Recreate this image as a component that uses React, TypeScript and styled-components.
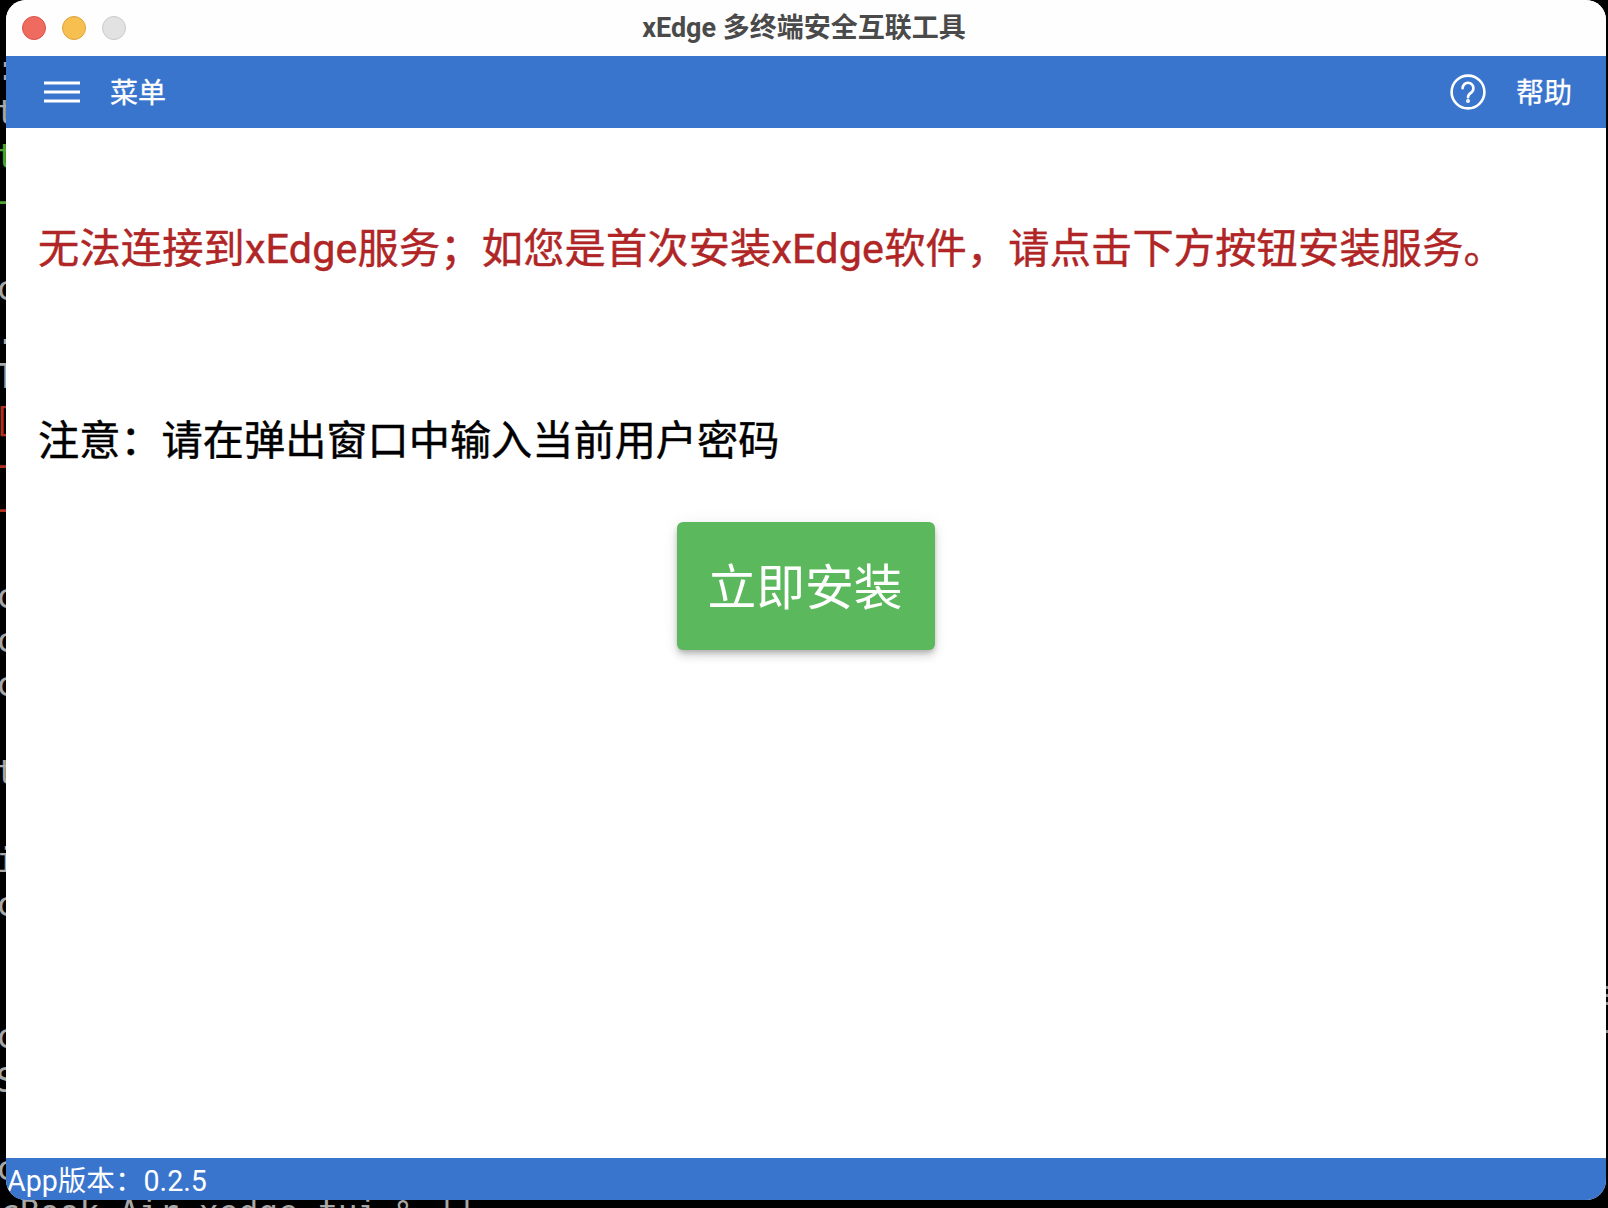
import React from 'react';
import styled, { createGlobalStyle } from 'styled-components';

const Global = createGlobalStyle`
  html, body { margin: 0; padding: 0; background: #000; }
  body { font-family: Roboto, "Noto Sans CJK SC", sans-serif; }
`;

const Desktop = styled.div`
  position: relative;
  width: 1608px;
  height: 1208px;
  overflow: hidden;
  background: #000;
`;

const Terminal = styled.div`
  position: absolute;
  left: -4px;
  top: 47px;
  font-family: "DejaVu Sans Mono", monospace;
  font-size: 33px;
  line-height: 44px;
  color: #a8a8a8;
  white-space: pre;
  opacity: 0.999;
`;

const TermLine = styled.div<{ $color?: string; $indent?: number; $rule?: boolean }>`
  height: 44px;
  line-height: ${p => (p.$rule ? 48 : 44)}px;
  color: ${p => p.$color ?? 'inherit'};
  margin-left: ${p => p.$indent ?? 0}px;
`;

const PromptLine = styled(TermLine)`
  padding-left: 4px;
`;

const EdgeTick = styled.div`
  position: absolute;
  right: 0;
  width: 2px;
  height: 3px;
  background: #8a8a8a;
`;

const Window = styled.div`
  position: absolute;
  left: 6px;
  top: 0;
  width: 1600px;
  height: 1200px;
  display: flex;
  flex-direction: column;
  background: #fff;
  border-radius: 20px;
  overflow: hidden;
`;

const TitleBar = styled.div`
  position: relative;
  height: 56px;
  flex: none;
  display: flex;
  justify-content: center;
  background: #fefefe;
`;

const Lights = styled.div`
  position: absolute;
  left: 16px;
  top: 16px;
  display: flex;
  gap: 16px;
`;

const Light = styled.div<{ $bg: string; $line: string }>`
  width: 24px;
  height: 24px;
  box-sizing: border-box;
  border-radius: 50%;
  background: ${p => p.$bg};
  border: 1px solid ${p => p.$line};
`;

const Title = styled.div`
  margin: 8px 4px 0 0;
  line-height: 40px;
  font-size: 27px;
  font-weight: 700;
  color: #4a4a4a;
`;

const Header = styled.header`
  height: 72px;
  flex: none;
  display: flex;
  align-items: center;
  justify-content: space-between;
  padding: 0 34px 0 38px;
  background: #3a75cd;
  color: #fff;
`;

const HeaderGroup = styled.div<{ $gap: number }>`
  display: flex;
  align-items: center;
  gap: ${p => p.$gap}px;
`;

const HeaderLabel = styled.span`
  font-size: 28px;
  line-height: 36px;
  margin-top: 4px;
  -webkit-text-stroke: 0.3px #fff;
`;

const Content = styled.main`
  flex: 1;
  min-height: 0;
  display: flex;
  flex-direction: column;
  padding: 0 33px 0 32px;
`;

const ErrorText = styled.div`
  margin-top: 96px;
  font-size: 41.2px;
  letter-spacing: 0.2px;
  line-height: 50px;
  color: #b02525;
  -webkit-text-stroke: 0.45px #b02525;
  white-space: nowrap;
`;

const Notice = styled.div`
  margin-top: 142px;
  font-size: 41.2px;
  line-height: 50px;
  color: #000;
  -webkit-text-stroke: 0.45px #000;
  white-space: nowrap;
`;

const InstallButton = styled.button`
  align-self: center;
  margin-top: 56px;
  margin-left: 1px;
  width: 258px;
  height: 128px;
  padding: 0 2px 5px 0;
  border: 0;
  border-radius: 6px;
  background: #5cb85c;
  color: #fff;
  font-family: inherit;
  font-size: 48.8px;
  box-shadow: 0 3px 5px -1px rgba(0,0,0,.2), 0 6px 10px 0 rgba(0,0,0,.14), 0 1px 18px 0 rgba(0,0,0,.06);
`;

const Footer = styled.footer`
  box-sizing: border-box;
  height: 42px;
  flex: none;
  display: flex;
  padding: 3px 0 0 1px;
  background: #3a75cd;
  color: #fff;
  font-size: 28.6px;
  line-height: 40px;
`;

const lines: [string, string?, number?][] = [
  [':'], ['t'], ['t', '#4aa52e'], ['─', '#4aa52e'], [''], ['c'], ['.'], ['T'],
  ['[', '#b03020', -3], ['─', '#b03020'], ['─', '#b03020'], [''], ['c'], ['c'], ['c'], [''],
  ['t'], [''], ['i'], ['c'], [''], [''], ['c'], ['S'], [''], ['c'],
];

const ticks = [986, 994, 1002, 1030];

export default function App() {
  return (
    <Desktop>
      <Global />
      <Terminal>
        {lines.map(([text, color, indent], i) => (
          <TermLine key={i} $color={color} $indent={indent} $rule={text === '─'}>{text}</TermLine>
        ))}
        <PromptLine>cBook-Air xedge_tui % ||</PromptLine>
      </Terminal>
      {ticks.map(top => <EdgeTick key={top} style={{ top }} />)}
      <Window>
        <TitleBar>
          <Lights>
            <Light $bg="#ef6a5f" $line="#d9534a" />
            <Light $bg="#f6bf4f" $line="#dea33c" />
            <Light $bg="#e2e2e2" $line="#c9c9c9" />
          </Lights>
          <Title>xEdge 多终端安全互联工具</Title>
        </TitleBar>
        <Header>
          <HeaderGroup $gap={30}>
            <svg width="36" height="24" viewBox="0 0 36 24" fill="none" stroke="#fff" strokeWidth="3">
              <path d="M0 3h36M0 12h36M0 21h36" />
            </svg>
            <HeaderLabel>菜单</HeaderLabel>
          </HeaderGroup>
          <HeaderGroup $gap={30}>
            <svg width="36" height="36" viewBox="0 0 36 36" fill="none" stroke="#fff" strokeWidth="2.6" strokeLinecap="round">
              <circle cx="18" cy="18" r="16.4" />
              <path d="M12.6 14.2a5.4 5.4 0 1 1 8.6 4.4c-2 1.4-3.2 2.4-3.2 4.6" />
              <circle cx="18" cy="27" r="0.7" fill="#fff" />
            </svg>
            <HeaderLabel>帮助</HeaderLabel>
          </HeaderGroup>
        </Header>
        <Content>
          <ErrorText>无法连接到xEdge服务；如您是首次安装xEdge软件，请点击下方按钮安装服务。</ErrorText>
          <Notice>注意：请在弹出窗口中输入当前用户密码</Notice>
          <InstallButton>立即安装</InstallButton>
        </Content>
        <Footer>App版本：0.2.5</Footer>
      </Window>
    </Desktop>
  );
}
